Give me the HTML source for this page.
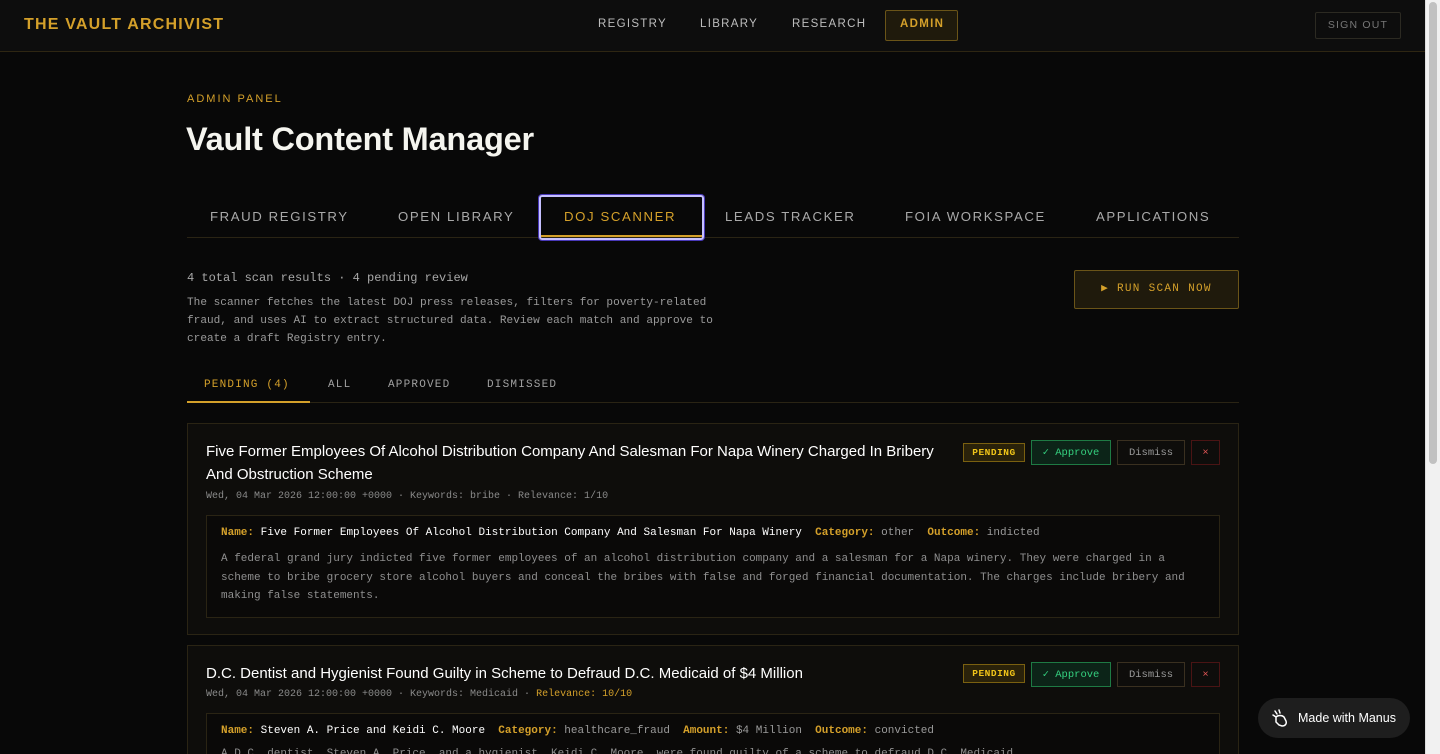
<!DOCTYPE html>
<html><head><meta charset="utf-8"><style>
*{margin:0;padding:0;box-sizing:border-box}
html{width:1440px;height:754px;overflow:hidden}
body{width:1440px;height:754px;overflow:hidden;background:#080808;font-family:"Liberation Sans",sans-serif;position:relative;color:#eee}
.a{position:absolute;white-space:nowrap}
.mono{font-family:"Liberation Mono",monospace}
.nav{position:absolute;left:0;top:0;width:1425px;height:52px;background:#0d0d0d;border-bottom:1px solid #2e2612}
.sb{position:absolute;left:1425px;top:0;width:15px;height:754px;background:#f1f1f1;border-left:1px solid #ddd}
.sb i{position:absolute;left:3px;top:2px;width:8px;height:462px;background:#c1c1c1;border-radius:4px}
.ni{font-size:11.5px;letter-spacing:1.3px;color:#bdbdbd;top:18px}
.tab{font-size:13.2px;letter-spacing:1.6px;color:#a9a9a9;top:209px}
.card{position:absolute;left:187px;width:1052px;background:#0e0d0b;border:1px solid #2a2414;overflow:hidden}
.inner{position:absolute;left:18px;width:1014px;background:#0a0908;border:1px solid #2a2414}
.btn{position:absolute;font-family:"Liberation Mono",monospace;font-size:10.5px;display:flex;align-items:center;justify-content:center}
.k{color:#d4a02a;font-weight:bold}
.w{color:#fff}
.g{color:#9a9a9a}
.pre{white-space:pre}
</style></head><body>
<div class="nav"></div>
<div class="a" style="left:24px;top:16px;font-size:16px;font-weight:bold;letter-spacing:1.2px;color:#d4a02a">THE VAULT ARCHIVIST</div>
<div class="a ni" style="left:598px">REGISTRY</div>
<div class="a ni" style="left:700px">LIBRARY</div>
<div class="a ni" style="left:792px">RESEARCH</div>
<div class="a" style="left:885px;top:10px;width:73px;height:31px;background:#1f1a0c;border:1px solid #6a5418;border-radius:2px"></div>
<div class="a ni" style="left:900px;color:#d4a02a;font-weight:bold">ADMIN</div>
<div class="a" style="left:1315px;top:12px;width:86px;height:27px;border:1px solid #2c2a22;border-radius:2px;font-size:10.5px;letter-spacing:1.2px;color:#777;text-align:center;line-height:25px">SIGN OUT</div>

<div class="a" style="left:187px;top:93px;font-size:11px;letter-spacing:2px;color:#d4a02a">ADMIN PANEL</div>
<div class="a" style="left:186px;top:121px;font-size:32.5px;font-weight:bold;color:#f5f5ef;letter-spacing:-0.2px">Vault Content Manager</div>

<div class="a" style="left:187px;top:237px;width:1052px;height:1px;background:#2a2414"></div>
<div class="a tab" style="left:210px">FRAUD REGISTRY</div>
<div class="a tab" style="left:398px">OPEN LIBRARY</div>
<div class="a" style="left:539px;top:195px;width:165px;height:45px;border:2px solid #c6c0ff;border-radius:3px;box-shadow:0 0 0 1px #4838b8"></div>
<div class="a" style="left:541px;top:235px;width:161px;height:2px;background:#d4a02a"></div>
<div class="a tab" style="left:564px;color:#d4a02a">DOJ SCANNER</div>
<div class="a tab" style="left:725px">LEADS TRACKER</div>
<div class="a tab" style="left:905px">FOIA WORKSPACE</div>
<div class="a tab" style="left:1096px">APPLICATIONS</div>

<div class="a mono" style="left:187px;top:271px;font-size:12px;color:#a8a8a8">4 total scan results · 4 pending review</div>
<div class="a mono" style="left:187px;top:294px;font-size:11.1px;line-height:18px;color:#9a9a9a;white-space:normal;width:545px">The scanner fetches the latest DOJ press releases, filters for poverty-related fraud, and uses AI to extract structured data. Review each match and approve to create a draft Registry entry.</div>
<div class="a mono" style="left:1074px;top:270px;width:165px;height:39px;background:#1f1a0c;border:1px solid #6a5418;border-radius:2px;color:#d4a02a;font-size:11px;letter-spacing:1.3px;text-align:center;line-height:37px">▶ RUN SCAN NOW</div>

<div class="a" style="left:187px;top:402px;width:1052px;height:1px;background:#2a2414"></div>
<div class="a" style="left:187px;top:401px;width:123px;height:2px;background:#d4a02a"></div>
<div class="a mono" style="left:204px;top:379px;font-size:11px;letter-spacing:1.2px;color:#d4a02a">PENDING (4)</div>
<div class="a mono" style="left:328px;top:379px;font-size:11px;letter-spacing:1.2px;color:#a0a0a0">ALL</div>
<div class="a mono" style="left:388px;top:379px;font-size:11px;letter-spacing:1.2px;color:#a0a0a0">APPROVED</div>
<div class="a mono" style="left:487px;top:379px;font-size:11px;letter-spacing:1.2px;color:#a0a0a0">DISMISSED</div>

<div class="card" style="top:423px;height:212px">
 <div class="a" style="left:18px;top:16px;font-size:15px;line-height:23px;color:#fff;white-space:normal;width:745px">Five Former Employees Of Alcohol Distribution Company And Salesman For Napa Winery Charged In Bribery And Obstruction Scheme</div>
 <div class="a mono" style="left:18px;top:67px;font-size:10px;color:#8a8a8a">Wed, 04 Mar 2026 12:00:00 +0000 · Keywords: bribe · Relevance: 1/10</div>
 <div class="inner" style="top:91px;height:103px">
  <div class="a mono pre" style="left:14px;top:11px;font-size:11px"><span class="k">Name:</span> <span class="w">Five Former Employees Of Alcohol Distribution Company And Salesman For Napa Winery</span>  <span class="k">Category:</span> <span class="g">other</span>  <span class="k">Outcome:</span> <span class="g">indicted</span></div>
  <div class="a mono" style="left:14px;top:34px;font-size:11px;line-height:18.7px;color:#8f8f8f;white-space:normal;width:975px">A federal grand jury indicted five former employees of an alcohol distribution company and a salesman for a Napa winery. They were charged in a scheme to bribe grocery store alcohol buyers and conceal the bribes with false and forged financial documentation. The charges include bribery and making false statements.</div>
 </div>
</div>
<div class="btn" style="left:963px;top:443px;width:62px;height:19px;background:#2a220a;border:1px solid #7a6010;color:#f0c419;font-weight:bold;font-size:9.5px;letter-spacing:.5px">PENDING</div>
<div class="btn" style="left:1031px;top:440px;width:80px;height:25px;background:#0c2418;border:1px solid #1e7a44;color:#35d07f">✓ Approve</div>
<div class="btn" style="left:1117px;top:440px;width:68px;height:25px;border:1px solid #3a3020;color:#999">Dismiss</div>
<div class="btn" style="left:1191px;top:440px;width:29px;height:25px;border:1px solid #4a1414;color:#e05555">×</div>

<div class="card" style="top:645px;height:109px;border-bottom:none">
 <div class="a" style="left:18px;top:16px;font-size:15px;line-height:23px;color:#fff">D.C. Dentist and Hygienist Found Guilty in Scheme to Defraud D.C. Medicaid of $4 Million</div>
 <div class="a mono" style="left:18px;top:43px;font-size:10px;color:#8a8a8a">Wed, 04 Mar 2026 12:00:00 +0000 · Keywords: Medicaid · <span style="color:#d4a02a">Relevance: 10/10</span></div>
 <div class="inner" style="top:67px;height:42px;border-bottom:none">
  <div class="a mono pre" style="left:14px;top:11px;font-size:11px"><span class="k">Name:</span> <span class="w">Steven A. Price and Keidi C. Moore</span>  <span class="k">Category:</span> <span class="g">healthcare_fraud</span>  <span class="k">Amount:</span> <span class="g">$4 Million</span>  <span class="k">Outcome:</span> <span class="g">convicted</span></div>
  <div class="a mono" style="left:14px;top:34px;font-size:11px;color:#8f8f8f">A D.C. dentist, Steven A. Price, and a hygienist, Keidi C. Moore, were found guilty of a scheme to defraud D.C. Medicaid.</div>
 </div>
</div>
<div class="btn" style="left:963px;top:664px;width:62px;height:19px;background:#2a220a;border:1px solid #7a6010;color:#f0c419;font-weight:bold;font-size:9.5px;letter-spacing:.5px">PENDING</div>
<div class="btn" style="left:1031px;top:662px;width:80px;height:25px;background:#0c2418;border:1px solid #1e7a44;color:#35d07f">✓ Approve</div>
<div class="btn" style="left:1117px;top:662px;width:68px;height:25px;border:1px solid #3a3020;color:#999">Dismiss</div>
<div class="btn" style="left:1191px;top:662px;width:29px;height:25px;border:1px solid #4a1414;color:#e05555">×</div>

<div class="a" style="left:1258px;top:698px;width:152px;height:40px;background:#1e1e1e;border-radius:20px"></div>
<svg class="a" style="left:1271px;top:708px" width="18" height="20" viewBox="0 0 18 20" fill="none" stroke="#fff" stroke-width="1.5" stroke-linecap="round"><path d="M4 3l2 3M8 2l1 3M2 7l3 2M5 9c2-2 6-2 8 0l2 4c1 3-1 5-4 5l-3-1-3-3z"/></svg>
<div class="a" style="left:1298px;top:711px;font-size:12.5px;color:#fff">Made with Manus</div>
<div class="sb"><i></i></div>
</body></html>
